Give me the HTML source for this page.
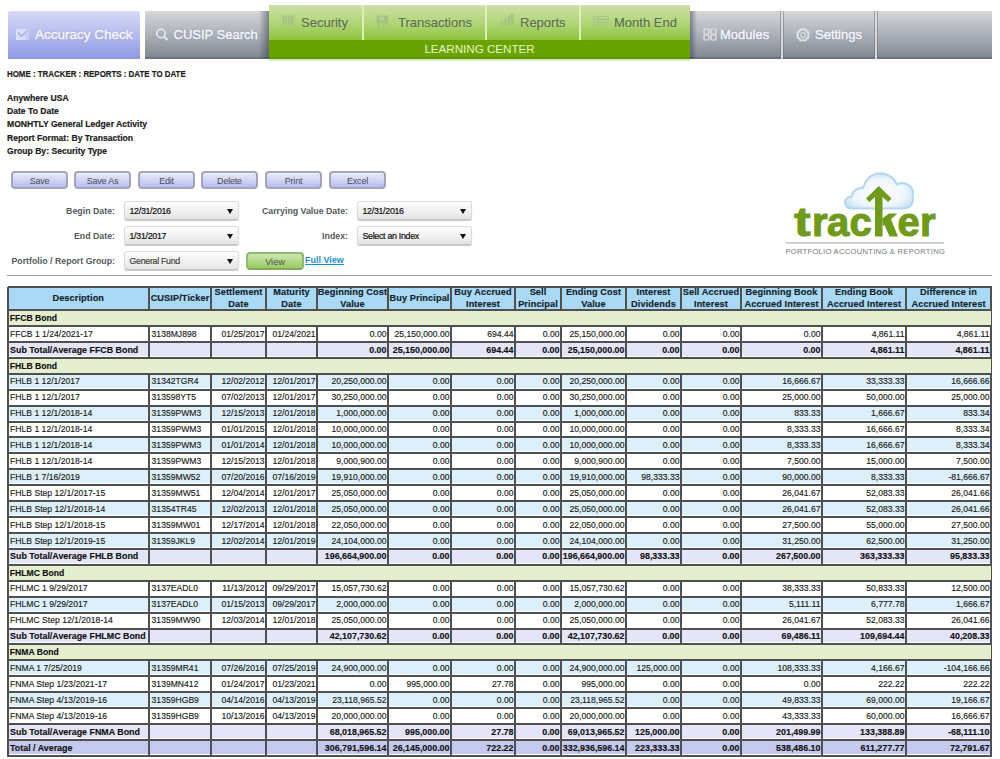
<!DOCTYPE html>
<html><head><meta charset="utf-8"><title>Tracker</title>
<style>
html,body{margin:0;padding:0;background:#fff;}
body{width:1000px;height:759px;overflow:hidden;position:relative;font-family:"Liberation Sans",sans-serif;}
.abs{position:absolute;}
/* nav */
.tab{position:absolute;top:11px;height:48px;}
.acc{left:8px;width:132px;background:linear-gradient(#d6d9f6,#b9bff0 45%,#8d98e1);border-radius:2px 2px 0 0;}
.cus{left:145px;width:124px;background:linear-gradient(#d6d6d7 0,#d6d6d7 2px,#ced1d4 3px,#b4b8bf 40%,#a6abb6 55%,#8d939a 85%,#7f878e 96%,#6c7177 97%,#6c7177);}
.cus:after{content:"";position:absolute;right:0;top:0;width:10px;height:48px;background:linear-gradient(90deg,rgba(60,65,75,0),rgba(60,65,75,.55));}
.gray{left:690px;width:302px;background:linear-gradient(#d6d6d7 0,#d6d6d7 2px,#ced1d4 3px,#b4b8bf 40%,#a6abb6 55%,#8d939a 85%,#7f878e 96%,#6c7177 97%,#6c7177);}
.gray:before{content:"";position:absolute;left:0;top:0;width:7px;height:48px;background:linear-gradient(90deg,rgba(60,62,90,.55),rgba(60,62,90,0));}
.sepg{position:absolute;top:0;width:2px;height:48px;background:#d6d8db;}
.sepd{position:absolute;top:0;width:1px;height:48px;background:rgba(100,106,116,.45);}
.tt{position:absolute;color:#fff;font-size:13px;line-height:13px;white-space:nowrap;-webkit-text-stroke:0.45px #f4f5fb;color:#f4f5fb;text-shadow:0 0 2px rgba(80,85,120,.5);}
.green{position:absolute;left:269px;top:5px;width:421px;height:54px;background:#6aa301;}
.gtop{position:absolute;left:0;top:0;width:421px;height:35px;background:linear-gradient(#cde0a6,#b2d57a 50%,#8ec33f);}
.gsep{position:absolute;top:0;width:2px;height:35px;background:#dcefb8;}
.gt{position:absolute;color:#587049;font-size:13px;line-height:13px;white-space:nowrap;-webkit-text-stroke:0.2px #587049;text-shadow:0 0 2px rgba(230,245,200,.6);}
.lc{position:absolute;left:0;width:421px;top:37.8px;text-align:center;color:#e4f8c0;font-size:11.6px;line-height:12px;}
.green:after{content:"";position:absolute;left:0;bottom:0;width:421px;height:2.5px;background:#5f9400;}
.green:before{content:"";position:absolute;left:0;bottom:-1.5px;width:421px;height:1.5px;background:#d6ecbc;z-index:1;}
/* text */
.bc{position:absolute;left:7px;top:68.3px;font-weight:bold;font-size:9.4px;transform:scaleX(0.843);transform-origin:0 0;color:#1e1e1e;white-space:nowrap;-webkit-text-stroke:0.2px #1e1e1e;}
.ti{position:absolute;left:7px;font-weight:bold;font-size:8.6px;color:#1e1e1e;white-space:nowrap;line-height:10px;-webkit-text-stroke:0.2px #1e1e1e;}
.btn{position:absolute;top:171px;width:53px;height:14px;border:2px solid #a2a5bc;border-radius:4px;background:linear-gradient(#e6e8f9,#d2d6f4 50%,#b6bdee);box-shadow:inset 0 1px 0 #f4f5fd;color:#4a4a55;font-size:9px;letter-spacing:-0.2px;line-height:16px;text-align:center;}
.lbl{position:absolute;font-weight:bold;font-size:8.8px;color:#555a60;text-align:right;white-space:nowrap;}
.sel{position:absolute;width:113px;height:17px;margin-top:-1px;border:1px solid #dcdcdc;border-bottom-color:#c4c4c4;border-radius:3px;background:linear-gradient(#fefefe,#f2f2f2 50%,#e4e4e4);box-shadow:0 1px 1px rgba(0,0,0,.22);font-size:8.8px;letter-spacing:-0.28px;line-height:17px;color:#111;-webkit-text-stroke:0.2px currentColor;}
.sel span{position:absolute;left:4.5px;top:1.3px;}
.sel i{position:absolute;right:5px;top:7.3px;width:0;height:0;border-left:3.6px solid transparent;border-right:3.6px solid transparent;border-top:5.8px solid #111;}
.view{position:absolute;left:246px;top:252px;width:54px;height:14px;border:2px solid #93b872;border-bottom-color:#82a85e;border-radius:4px;background:linear-gradient(#cfe6b2,#b4d88a 50%,#98ca62);color:#4a5444;font-size:9.2px;line-height:16px;text-align:center;}
.fv{position:absolute;left:305px;top:255px;font-size:9px;font-weight:bold;color:#1a8fd8;text-decoration:underline;white-space:nowrap;}
.hr{position:absolute;left:7px;top:275px;width:985px;height:1px;background:#9a9a9a;}
/* table */
.c{position:absolute;box-sizing:border-box;font-size:8.6px;line-height:15px;padding-top:0.6px;white-space:nowrap;overflow:hidden;color:#1c1c1c;-webkit-text-stroke:0.15px currentColor;box-shadow:inset 0 0 0 1px #fff, inset 0 -2px 0 #fff;}
.c.l{text-align:left;padding-left:2.6px;}
.c.r{text-align:right;padding-right:1.5px;}
.th{background:#a9d9f4;font-weight:bold;font-size:9.2px;letter-spacing:0.1px;color:#16222c;text-align:center;display:flex;align-items:center;justify-content:center;line-height:11.9px;padding-top:1.5px;box-shadow:inset 1px 1px 0 #d8eefa;}
.sec{background:#e6eed0;font-weight:bold;color:#111;box-shadow:inset 0 -1px 0 #f4f7e6;padding-top:0;line-height:14.6px;}
.c.sec.l{padding-left:1.3px;}
.d{background:#fff;}
.d.alt{background:#ddeffa;}
.sub{background:#e4e5f9;font-weight:bold;color:#111;font-size:8.9px;}
.tot{background:#c5c9ef;font-weight:bold;color:#111;font-size:8.9px;}
.vl{position:absolute;width:2px;margin-left:-1px;background:#505050;}
.hl{position:absolute;height:2px;margin-top:-1px;background:#505050;}

</style></head><body>
<div class="tab acc">
  <svg class="abs" style="left:8px;top:15px" width="14" height="15" viewBox="0 0 14 15"><rect x="0" y="0.5" width="13" height="1.2" fill="#c2c7f0"/><rect x="0" y="3" width="13" height="11" fill="#d9ddf8"/><path d="M2 6.5l3.2 3.8L12 4" fill="none" stroke="#a9b1e6" stroke-width="1.7"/><rect x="9.5" y="3" width="3.5" height="11" fill="#bcc2ee" opacity=".6"/></svg>
  <div class="tt" style="left:27px;top:17px;font-size:13.5px">Accuracy Check</div>
</div>
<div class="tab cus">
  <svg class="abs" style="left:10px;top:17px" width="14" height="13" viewBox="0 0 14 13"><circle cx="6" cy="5.5" r="4.2" fill="none" stroke="#e8e9eb" stroke-width="1.6"/><path d="M9 8.5l3.5 3.5" stroke="#e8e9eb" stroke-width="2"/></svg>
  <div class="tt" style="left:28.5px;top:17px">CUSIP Search</div>
</div>
<div class="green">
  <div class="gtop"></div>
  <div class="gsep" style="left:93px"></div>
  <div class="gsep" style="left:216px"></div>
  <div class="gsep" style="left:310px"></div>
  <svg class="abs" style="left:12px;top:3.5px" width="15" height="17" viewBox="0 0 15 17"><rect x="0.5" y="0.5" width="14" height="5" fill="#c2dc98" opacity=".7"/><rect x="0.5" y="6" width="13" height="11" fill="#b0cf88" opacity=".6"/><path d="M2.5 6.5v10M5 6.5v10M7.5 6.5v10M10 6.5v10M12 6.5v10" stroke="#9dbd7a" stroke-width="1.2" opacity=".8"/></svg>
  <div class="gt" style="left:32px;top:10.5px">Security</div>
  <svg class="abs" style="left:107px;top:10px" width="14" height="13" viewBox="0 0 14 13"><rect x="0.5" y="0.5" width="12" height="8" rx="1.5" fill="#9fbe7e" opacity=".75"/><rect x="3" y="2" width="5" height="3" fill="#b8d49a" opacity=".8"/><path d="M3 9v3.5M8 9v3.5" stroke="#a3c27f" stroke-width="1.6" opacity=".7"/></svg>
  <div class="gt" style="left:129px;top:10.5px">Transactions</div>
  <svg class="abs" style="left:231px;top:8px" width="14" height="13" viewBox="0 0 14 13"><path d="M2 12.5V8M5.5 12.5V5.5M9 12.5V3M12 12.5V1" stroke="#a0be82" stroke-width="2.6" opacity=".75"/></svg>
  <div class="gt" style="left:251px;top:10.5px">Reports</div>
  <svg class="abs" style="left:323.5px;top:10.5px" width="17" height="10" viewBox="0 0 17 10"><rect x="0.5" y="0.5" width="15" height="8.5" fill="#b5d292" opacity=".6" stroke="#a3c283" stroke-width="1"/><path d="M0.5 3.5h15M0.5 6.3h15M5.5 0.5v8.5" stroke="#a3c283" stroke-width="1"/></svg>
  <div class="gt" style="left:345px;top:10.5px">Month End</div>
  <div class="lc">LEARNING CENTER</div>
</div>
<div class="tab gray">
  <div class="sepd" style="left:90px"></div><div class="sepg" style="left:91px"></div><div class="sepd" style="left:93px"></div>
  <div class="sepd" style="left:184px"></div><div class="sepg" style="left:185px"></div><div class="sepd" style="left:187px"></div>
  <svg class="abs" style="left:13px;top:17px" width="14" height="13" viewBox="0 0 14 13"><rect x="1" y="1" width="5" height="5" rx="1" fill="none" stroke="#e4e6e8" stroke-width="1.2"/><rect x="8" y="1" width="5" height="5" rx="1" fill="none" stroke="#e4e6e8" stroke-width="1.2"/><rect x="1" y="7" width="5" height="5" rx="1" fill="none" stroke="#e4e6e8" stroke-width="1.2"/><rect x="8" y="7" width="5" height="5" rx="1" fill="none" stroke="#e4e6e8" stroke-width="1.2"/></svg>
  <div class="tt" style="left:30px;top:17px">Modules</div>
  <svg class="abs" style="left:105px;top:15.5px" width="16" height="16" viewBox="0 0 16 16"><circle cx="8" cy="8" r="4.6" fill="#dfe1e4"/><circle cx="12.25" cy="9.76" r="2.4" fill="#dfe1e4"/><circle cx="9.76" cy="12.25" r="2.4" fill="#dfe1e4"/><circle cx="6.24" cy="12.25" r="2.4" fill="#dfe1e4"/><circle cx="3.75" cy="9.76" r="2.4" fill="#dfe1e4"/><circle cx="3.75" cy="6.24" r="2.4" fill="#dfe1e4"/><circle cx="6.24" cy="3.75" r="2.4" fill="#dfe1e4"/><circle cx="9.76" cy="3.75" r="2.4" fill="#dfe1e4"/><circle cx="12.25" cy="6.24" r="2.4" fill="#dfe1e4"/><circle cx="8" cy="8" r="3.4" fill="#a9aeb6"/><circle cx="11.14" cy="9.30" r="1.3" fill="#a9aeb6"/><circle cx="9.30" cy="11.14" r="1.3" fill="#a9aeb6"/><circle cx="6.70" cy="11.14" r="1.3" fill="#a9aeb6"/><circle cx="4.86" cy="9.30" r="1.3" fill="#a9aeb6"/><circle cx="4.86" cy="6.70" r="1.3" fill="#a9aeb6"/><circle cx="6.70" cy="4.86" r="1.3" fill="#a9aeb6"/><circle cx="9.30" cy="4.86" r="1.3" fill="#a9aeb6"/><circle cx="11.14" cy="6.70" r="1.3" fill="#a9aeb6"/><circle cx="8" cy="8" r="2.3" fill="none" stroke="#dfe1e4" stroke-width="1.2"/></svg>
  <div class="tt" style="left:125px;top:17px">Settings</div>
</div>

<div class="bc">HOME : TRACKER : REPORTS : DATE TO DATE</div>
<div class="ti" style="top:92.6px">Anywhere USA</div>
<div class="ti" style="top:106.1px">Date To Date</div>
<div class="ti" style="top:119.3px">MONHTLY General Ledger Activity</div>
<div class="ti" style="top:132.6px">Report Format: By Transaction</div>
<div class="ti" style="top:146.1px">Group By: Security Type</div>

<div class="btn" style="left:11px">Save</div>
<div class="btn" style="left:74px">Save As</div>
<div class="btn" style="left:138px">Edit</div>
<div class="btn" style="left:201px">Delete</div>
<div class="btn" style="left:265px">Print</div>
<div class="btn" style="left:329px">Excel</div>

<div class="lbl" style="right:885px;top:206px">Begin Date:</div>
<div class="lbl" style="right:885px;top:231px">End Date:</div>
<div class="lbl" style="right:885px;top:256px">Portfolio / Report Group:</div>
<div class="sel" style="left:124px;top:202px"><span>12/31/2016</span><i></i></div>
<div class="sel" style="left:124px;top:227px"><span>1/31/2017</span><i></i></div>
<div class="sel" style="left:124px;top:252px"><span style="color:#444">General Fund</span><i></i></div>
<div class="lbl" style="right:652px;top:206px">Carrying Value Date:</div>
<div class="lbl" style="right:652px;top:231px">Index:</div>
<div class="sel" style="left:357px;top:202px"><span>12/31/2016</span><i></i></div>
<div class="sel" style="left:357px;top:227px"><span>Select an Index</span><i></i></div>
<div class="view">View</div>
<div class="fv">Full View</div>

<svg class="abs" style="left:780px;top:165px" width="180" height="100" viewBox="0 0 180 100">
  <defs><radialGradient id="cg" cx="50%" cy="55%" r="65%"><stop offset="0" stop-color="#ffffff"/><stop offset="0.6" stop-color="#eef6fc"/><stop offset="1" stop-color="#b9d9f1"/></radialGradient></defs>
  <path d="M72 43.5 C63.5 43.5 62 33 71.5 31.5 C72.5 26 77 22.5 83 23 C86 13 93 8.4 100 8.4 C108 8.4 114 13 117 19.5 C126 15.5 134.5 22 132.5 31 C134.5 38 130 43.5 124 43.5 Z" fill="url(#cg)" stroke="#b6d8f1" stroke-width="2.2"/>
  <g fill="#6f9a1b" stroke="#6f9a1b" stroke-width="1.1" font-family="Liberation Sans" font-weight="bold" font-size="40">
  <text transform="translate(14.3,71) scale(1.22,1)">t</text>
  <text x="32" y="71">r</text>
  <text x="47" y="71">a</text>
  <text x="69.5" y="71">c</text>
  <text x="117.5" y="71">e</text>
  <text x="140" y="71">r</text>
  </g>
  <path d="M98.75 71.5V26" stroke="#6f9a1b" stroke-width="7.5"/>
  <path d="M98.75 21L111.5 33.5L108 37L98.75 28.5L89.5 37L86 33.5Z" fill="#6f9a1b"/>
  <path d="M102 53.5L109 48.6L117.5 48.6L103 61Z M104 59L110.5 53L118 71.4L109.5 71.4Z" fill="#6f9a1b"/>
  <rect x="5.4" y="77" width="158.6" height="1.8" fill="#c9cccf"/>
  <text x="5.4" y="89" font-family="Liberation Sans" font-size="7.6" fill="#74777a" letter-spacing="0.28">PORTFOLIO ACCOUNTING &amp; REPORTING</text>
</svg>

<div class="hr"></div>
<div class="c th" style="left:7.50px;width:141.50px;top:286.60px;height:23.50px"><span>Description</span></div>
<div class="c th" style="left:149.00px;width:62.00px;top:286.60px;height:23.50px"><span>CUSIP/Ticker</span></div>
<div class="c th" style="left:211.00px;width:55.00px;top:286.60px;height:23.50px"><span>Settlement<br>Date</span></div>
<div class="c th" style="left:266.00px;width:51.00px;top:286.60px;height:23.50px"><span>Maturity<br>Date</span></div>
<div class="c th" style="left:317.00px;width:71.00px;top:286.60px;height:23.50px"><span>Beginning Cost<br>Value</span></div>
<div class="c th" style="left:388.00px;width:63.00px;top:286.60px;height:23.50px"><span>Buy Principal</span></div>
<div class="c th" style="left:451.00px;width:64.00px;top:286.60px;height:23.50px"><span>Buy Accrued<br>Interest</span></div>
<div class="c th" style="left:515.00px;width:46.00px;top:286.60px;height:23.50px"><span>Sell<br>Principal</span></div>
<div class="c th" style="left:561.00px;width:65.00px;top:286.60px;height:23.50px"><span>Ending Cost<br>Value</span></div>
<div class="c th" style="left:626.00px;width:55.00px;top:286.60px;height:23.50px"><span>Interest<br>Dividends</span></div>
<div class="c th" style="left:681.00px;width:60.00px;top:286.60px;height:23.50px"><span>Sell Accrued<br>Interest</span></div>
<div class="c th" style="left:741.00px;width:81.00px;top:286.60px;height:23.50px"><span>Beginning Book<br>Accrued Interest</span></div>
<div class="c th" style="left:822.00px;width:84.00px;top:286.60px;height:23.50px"><span>Ending Book<br>Accrued Interest</span></div>
<div class="c th" style="left:906.00px;width:85.00px;top:286.60px;height:23.50px"><span>Difference in<br>Accrued Interest</span></div>
<div class="c d l" style="left:7.50px;width:141.50px;top:326.02px;height:15.92px">FFCB 1 1/24/2021-17</div>
<div class="c d l" style="left:149.00px;width:62.00px;top:326.02px;height:15.92px">3138MJ898</div>
<div class="c d r" style="left:211.00px;width:55.00px;top:326.02px;height:15.92px">01/25/2017</div>
<div class="c d r" style="left:266.00px;width:51.00px;top:326.02px;height:15.92px">01/24/2021</div>
<div class="c d r" style="left:317.00px;width:71.00px;top:326.02px;height:15.92px">0.00</div>
<div class="c d r" style="left:388.00px;width:63.00px;top:326.02px;height:15.92px">25,150,000.00</div>
<div class="c d r" style="left:451.00px;width:64.00px;top:326.02px;height:15.92px">694.44</div>
<div class="c d r" style="left:515.00px;width:46.00px;top:326.02px;height:15.92px">0.00</div>
<div class="c d r" style="left:561.00px;width:65.00px;top:326.02px;height:15.92px">25,150,000.00</div>
<div class="c d r" style="left:626.00px;width:55.00px;top:326.02px;height:15.92px">0.00</div>
<div class="c d r" style="left:681.00px;width:60.00px;top:326.02px;height:15.92px">0.00</div>
<div class="c d r" style="left:741.00px;width:81.00px;top:326.02px;height:15.92px">0.00</div>
<div class="c d r" style="left:822.00px;width:84.00px;top:326.02px;height:15.92px">4,861.11</div>
<div class="c d r" style="left:906.00px;width:85.00px;top:326.02px;height:15.92px">4,861.11</div>
<div class="c sub l" style="left:7.50px;width:141.50px;top:341.94px;height:15.92px">Sub Total/Average FFCB Bond</div>
<div class="c sub l" style="left:149.00px;width:62.00px;top:341.94px;height:15.92px"></div>
<div class="c sub r" style="left:211.00px;width:55.00px;top:341.94px;height:15.92px"></div>
<div class="c sub r" style="left:266.00px;width:51.00px;top:341.94px;height:15.92px"></div>
<div class="c sub r" style="left:317.00px;width:71.00px;top:341.94px;height:15.92px">0.00</div>
<div class="c sub r" style="left:388.00px;width:63.00px;top:341.94px;height:15.92px">25,150,000.00</div>
<div class="c sub r" style="left:451.00px;width:64.00px;top:341.94px;height:15.92px">694.44</div>
<div class="c sub r" style="left:515.00px;width:46.00px;top:341.94px;height:15.92px">0.00</div>
<div class="c sub r" style="left:561.00px;width:65.00px;top:341.94px;height:15.92px">25,150,000.00</div>
<div class="c sub r" style="left:626.00px;width:55.00px;top:341.94px;height:15.92px">0.00</div>
<div class="c sub r" style="left:681.00px;width:60.00px;top:341.94px;height:15.92px">0.00</div>
<div class="c sub r" style="left:741.00px;width:81.00px;top:341.94px;height:15.92px">0.00</div>
<div class="c sub r" style="left:822.00px;width:84.00px;top:341.94px;height:15.92px">4,861.11</div>
<div class="c sub r" style="left:906.00px;width:85.00px;top:341.94px;height:15.92px">4,861.11</div>
<div class="c d alt l" style="left:7.50px;width:141.50px;top:373.78px;height:15.92px">FHLB 1 12/1/2017</div>
<div class="c d alt l" style="left:149.00px;width:62.00px;top:373.78px;height:15.92px">31342TGR4</div>
<div class="c d alt r" style="left:211.00px;width:55.00px;top:373.78px;height:15.92px">12/02/2012</div>
<div class="c d alt r" style="left:266.00px;width:51.00px;top:373.78px;height:15.92px">12/01/2017</div>
<div class="c d alt r" style="left:317.00px;width:71.00px;top:373.78px;height:15.92px">20,250,000.00</div>
<div class="c d alt r" style="left:388.00px;width:63.00px;top:373.78px;height:15.92px">0.00</div>
<div class="c d alt r" style="left:451.00px;width:64.00px;top:373.78px;height:15.92px">0.00</div>
<div class="c d alt r" style="left:515.00px;width:46.00px;top:373.78px;height:15.92px">0.00</div>
<div class="c d alt r" style="left:561.00px;width:65.00px;top:373.78px;height:15.92px">20,250,000.00</div>
<div class="c d alt r" style="left:626.00px;width:55.00px;top:373.78px;height:15.92px">0.00</div>
<div class="c d alt r" style="left:681.00px;width:60.00px;top:373.78px;height:15.92px">0.00</div>
<div class="c d alt r" style="left:741.00px;width:81.00px;top:373.78px;height:15.92px">16,666.67</div>
<div class="c d alt r" style="left:822.00px;width:84.00px;top:373.78px;height:15.92px">33,333.33</div>
<div class="c d alt r" style="left:906.00px;width:85.00px;top:373.78px;height:15.92px">16,666.66</div>
<div class="c d l" style="left:7.50px;width:141.50px;top:389.70px;height:15.92px">FHLB 1 12/1/2017</div>
<div class="c d l" style="left:149.00px;width:62.00px;top:389.70px;height:15.92px">313598YT5</div>
<div class="c d r" style="left:211.00px;width:55.00px;top:389.70px;height:15.92px">07/02/2013</div>
<div class="c d r" style="left:266.00px;width:51.00px;top:389.70px;height:15.92px">12/01/2017</div>
<div class="c d r" style="left:317.00px;width:71.00px;top:389.70px;height:15.92px">30,250,000.00</div>
<div class="c d r" style="left:388.00px;width:63.00px;top:389.70px;height:15.92px">0.00</div>
<div class="c d r" style="left:451.00px;width:64.00px;top:389.70px;height:15.92px">0.00</div>
<div class="c d r" style="left:515.00px;width:46.00px;top:389.70px;height:15.92px">0.00</div>
<div class="c d r" style="left:561.00px;width:65.00px;top:389.70px;height:15.92px">30,250,000.00</div>
<div class="c d r" style="left:626.00px;width:55.00px;top:389.70px;height:15.92px">0.00</div>
<div class="c d r" style="left:681.00px;width:60.00px;top:389.70px;height:15.92px">0.00</div>
<div class="c d r" style="left:741.00px;width:81.00px;top:389.70px;height:15.92px">25,000.00</div>
<div class="c d r" style="left:822.00px;width:84.00px;top:389.70px;height:15.92px">50,000.00</div>
<div class="c d r" style="left:906.00px;width:85.00px;top:389.70px;height:15.92px">25,000.00</div>
<div class="c d alt l" style="left:7.50px;width:141.50px;top:405.62px;height:15.92px">FHLB 1 12/1/2018-14</div>
<div class="c d alt l" style="left:149.00px;width:62.00px;top:405.62px;height:15.92px">31359PWM3</div>
<div class="c d alt r" style="left:211.00px;width:55.00px;top:405.62px;height:15.92px">12/15/2013</div>
<div class="c d alt r" style="left:266.00px;width:51.00px;top:405.62px;height:15.92px">12/01/2018</div>
<div class="c d alt r" style="left:317.00px;width:71.00px;top:405.62px;height:15.92px">1,000,000.00</div>
<div class="c d alt r" style="left:388.00px;width:63.00px;top:405.62px;height:15.92px">0.00</div>
<div class="c d alt r" style="left:451.00px;width:64.00px;top:405.62px;height:15.92px">0.00</div>
<div class="c d alt r" style="left:515.00px;width:46.00px;top:405.62px;height:15.92px">0.00</div>
<div class="c d alt r" style="left:561.00px;width:65.00px;top:405.62px;height:15.92px">1,000,000.00</div>
<div class="c d alt r" style="left:626.00px;width:55.00px;top:405.62px;height:15.92px">0.00</div>
<div class="c d alt r" style="left:681.00px;width:60.00px;top:405.62px;height:15.92px">0.00</div>
<div class="c d alt r" style="left:741.00px;width:81.00px;top:405.62px;height:15.92px">833.33</div>
<div class="c d alt r" style="left:822.00px;width:84.00px;top:405.62px;height:15.92px">1,666.67</div>
<div class="c d alt r" style="left:906.00px;width:85.00px;top:405.62px;height:15.92px">833.34</div>
<div class="c d l" style="left:7.50px;width:141.50px;top:421.54px;height:15.92px">FHLB 1 12/1/2018-14</div>
<div class="c d l" style="left:149.00px;width:62.00px;top:421.54px;height:15.92px">31359PWM3</div>
<div class="c d r" style="left:211.00px;width:55.00px;top:421.54px;height:15.92px">01/01/2015</div>
<div class="c d r" style="left:266.00px;width:51.00px;top:421.54px;height:15.92px">12/01/2018</div>
<div class="c d r" style="left:317.00px;width:71.00px;top:421.54px;height:15.92px">10,000,000.00</div>
<div class="c d r" style="left:388.00px;width:63.00px;top:421.54px;height:15.92px">0.00</div>
<div class="c d r" style="left:451.00px;width:64.00px;top:421.54px;height:15.92px">0.00</div>
<div class="c d r" style="left:515.00px;width:46.00px;top:421.54px;height:15.92px">0.00</div>
<div class="c d r" style="left:561.00px;width:65.00px;top:421.54px;height:15.92px">10,000,000.00</div>
<div class="c d r" style="left:626.00px;width:55.00px;top:421.54px;height:15.92px">0.00</div>
<div class="c d r" style="left:681.00px;width:60.00px;top:421.54px;height:15.92px">0.00</div>
<div class="c d r" style="left:741.00px;width:81.00px;top:421.54px;height:15.92px">8,333.33</div>
<div class="c d r" style="left:822.00px;width:84.00px;top:421.54px;height:15.92px">16,666.67</div>
<div class="c d r" style="left:906.00px;width:85.00px;top:421.54px;height:15.92px">8,333.34</div>
<div class="c d alt l" style="left:7.50px;width:141.50px;top:437.46px;height:15.92px">FHLB 1 12/1/2018-14</div>
<div class="c d alt l" style="left:149.00px;width:62.00px;top:437.46px;height:15.92px">31359PWM3</div>
<div class="c d alt r" style="left:211.00px;width:55.00px;top:437.46px;height:15.92px">01/01/2014</div>
<div class="c d alt r" style="left:266.00px;width:51.00px;top:437.46px;height:15.92px">12/01/2018</div>
<div class="c d alt r" style="left:317.00px;width:71.00px;top:437.46px;height:15.92px">10,000,000.00</div>
<div class="c d alt r" style="left:388.00px;width:63.00px;top:437.46px;height:15.92px">0.00</div>
<div class="c d alt r" style="left:451.00px;width:64.00px;top:437.46px;height:15.92px">0.00</div>
<div class="c d alt r" style="left:515.00px;width:46.00px;top:437.46px;height:15.92px">0.00</div>
<div class="c d alt r" style="left:561.00px;width:65.00px;top:437.46px;height:15.92px">10,000,000.00</div>
<div class="c d alt r" style="left:626.00px;width:55.00px;top:437.46px;height:15.92px">0.00</div>
<div class="c d alt r" style="left:681.00px;width:60.00px;top:437.46px;height:15.92px">0.00</div>
<div class="c d alt r" style="left:741.00px;width:81.00px;top:437.46px;height:15.92px">8,333.33</div>
<div class="c d alt r" style="left:822.00px;width:84.00px;top:437.46px;height:15.92px">16,666.67</div>
<div class="c d alt r" style="left:906.00px;width:85.00px;top:437.46px;height:15.92px">8,333.34</div>
<div class="c d l" style="left:7.50px;width:141.50px;top:453.38px;height:15.92px">FHLB 1 12/1/2018-14</div>
<div class="c d l" style="left:149.00px;width:62.00px;top:453.38px;height:15.92px">31359PWM3</div>
<div class="c d r" style="left:211.00px;width:55.00px;top:453.38px;height:15.92px">12/15/2013</div>
<div class="c d r" style="left:266.00px;width:51.00px;top:453.38px;height:15.92px">12/01/2018</div>
<div class="c d r" style="left:317.00px;width:71.00px;top:453.38px;height:15.92px">9,000,900.00</div>
<div class="c d r" style="left:388.00px;width:63.00px;top:453.38px;height:15.92px">0.00</div>
<div class="c d r" style="left:451.00px;width:64.00px;top:453.38px;height:15.92px">0.00</div>
<div class="c d r" style="left:515.00px;width:46.00px;top:453.38px;height:15.92px">0.00</div>
<div class="c d r" style="left:561.00px;width:65.00px;top:453.38px;height:15.92px">9,000,900.00</div>
<div class="c d r" style="left:626.00px;width:55.00px;top:453.38px;height:15.92px">0.00</div>
<div class="c d r" style="left:681.00px;width:60.00px;top:453.38px;height:15.92px">0.00</div>
<div class="c d r" style="left:741.00px;width:81.00px;top:453.38px;height:15.92px">7,500.00</div>
<div class="c d r" style="left:822.00px;width:84.00px;top:453.38px;height:15.92px">15,000.00</div>
<div class="c d r" style="left:906.00px;width:85.00px;top:453.38px;height:15.92px">7,500.00</div>
<div class="c d alt l" style="left:7.50px;width:141.50px;top:469.30px;height:15.92px">FHLB 1 7/16/2019</div>
<div class="c d alt l" style="left:149.00px;width:62.00px;top:469.30px;height:15.92px">31359MW52</div>
<div class="c d alt r" style="left:211.00px;width:55.00px;top:469.30px;height:15.92px">07/20/2016</div>
<div class="c d alt r" style="left:266.00px;width:51.00px;top:469.30px;height:15.92px">07/16/2019</div>
<div class="c d alt r" style="left:317.00px;width:71.00px;top:469.30px;height:15.92px">19,910,000.00</div>
<div class="c d alt r" style="left:388.00px;width:63.00px;top:469.30px;height:15.92px">0.00</div>
<div class="c d alt r" style="left:451.00px;width:64.00px;top:469.30px;height:15.92px">0.00</div>
<div class="c d alt r" style="left:515.00px;width:46.00px;top:469.30px;height:15.92px">0.00</div>
<div class="c d alt r" style="left:561.00px;width:65.00px;top:469.30px;height:15.92px">19,910,000.00</div>
<div class="c d alt r" style="left:626.00px;width:55.00px;top:469.30px;height:15.92px">98,333.33</div>
<div class="c d alt r" style="left:681.00px;width:60.00px;top:469.30px;height:15.92px">0.00</div>
<div class="c d alt r" style="left:741.00px;width:81.00px;top:469.30px;height:15.92px">90,000.00</div>
<div class="c d alt r" style="left:822.00px;width:84.00px;top:469.30px;height:15.92px">8,333.33</div>
<div class="c d alt r" style="left:906.00px;width:85.00px;top:469.30px;height:15.92px">-81,666.67</div>
<div class="c d l" style="left:7.50px;width:141.50px;top:485.22px;height:15.92px">FHLB Step 12/1/2017-15</div>
<div class="c d l" style="left:149.00px;width:62.00px;top:485.22px;height:15.92px">31359MW51</div>
<div class="c d r" style="left:211.00px;width:55.00px;top:485.22px;height:15.92px">12/04/2014</div>
<div class="c d r" style="left:266.00px;width:51.00px;top:485.22px;height:15.92px">12/01/2017</div>
<div class="c d r" style="left:317.00px;width:71.00px;top:485.22px;height:15.92px">25,050,000.00</div>
<div class="c d r" style="left:388.00px;width:63.00px;top:485.22px;height:15.92px">0.00</div>
<div class="c d r" style="left:451.00px;width:64.00px;top:485.22px;height:15.92px">0.00</div>
<div class="c d r" style="left:515.00px;width:46.00px;top:485.22px;height:15.92px">0.00</div>
<div class="c d r" style="left:561.00px;width:65.00px;top:485.22px;height:15.92px">25,050,000.00</div>
<div class="c d r" style="left:626.00px;width:55.00px;top:485.22px;height:15.92px">0.00</div>
<div class="c d r" style="left:681.00px;width:60.00px;top:485.22px;height:15.92px">0.00</div>
<div class="c d r" style="left:741.00px;width:81.00px;top:485.22px;height:15.92px">26,041.67</div>
<div class="c d r" style="left:822.00px;width:84.00px;top:485.22px;height:15.92px">52,083.33</div>
<div class="c d r" style="left:906.00px;width:85.00px;top:485.22px;height:15.92px">26,041.66</div>
<div class="c d alt l" style="left:7.50px;width:141.50px;top:501.14px;height:15.92px">FHLB Step 12/1/2018-14</div>
<div class="c d alt l" style="left:149.00px;width:62.00px;top:501.14px;height:15.92px">31354TR45</div>
<div class="c d alt r" style="left:211.00px;width:55.00px;top:501.14px;height:15.92px">12/02/2013</div>
<div class="c d alt r" style="left:266.00px;width:51.00px;top:501.14px;height:15.92px">12/01/2018</div>
<div class="c d alt r" style="left:317.00px;width:71.00px;top:501.14px;height:15.92px">25,050,000.00</div>
<div class="c d alt r" style="left:388.00px;width:63.00px;top:501.14px;height:15.92px">0.00</div>
<div class="c d alt r" style="left:451.00px;width:64.00px;top:501.14px;height:15.92px">0.00</div>
<div class="c d alt r" style="left:515.00px;width:46.00px;top:501.14px;height:15.92px">0.00</div>
<div class="c d alt r" style="left:561.00px;width:65.00px;top:501.14px;height:15.92px">25,050,000.00</div>
<div class="c d alt r" style="left:626.00px;width:55.00px;top:501.14px;height:15.92px">0.00</div>
<div class="c d alt r" style="left:681.00px;width:60.00px;top:501.14px;height:15.92px">0.00</div>
<div class="c d alt r" style="left:741.00px;width:81.00px;top:501.14px;height:15.92px">26,041.67</div>
<div class="c d alt r" style="left:822.00px;width:84.00px;top:501.14px;height:15.92px">52,083.33</div>
<div class="c d alt r" style="left:906.00px;width:85.00px;top:501.14px;height:15.92px">26,041.66</div>
<div class="c d l" style="left:7.50px;width:141.50px;top:517.06px;height:15.92px">FHLB Step 12/1/2018-15</div>
<div class="c d l" style="left:149.00px;width:62.00px;top:517.06px;height:15.92px">31359MW01</div>
<div class="c d r" style="left:211.00px;width:55.00px;top:517.06px;height:15.92px">12/17/2014</div>
<div class="c d r" style="left:266.00px;width:51.00px;top:517.06px;height:15.92px">12/01/2018</div>
<div class="c d r" style="left:317.00px;width:71.00px;top:517.06px;height:15.92px">22,050,000.00</div>
<div class="c d r" style="left:388.00px;width:63.00px;top:517.06px;height:15.92px">0.00</div>
<div class="c d r" style="left:451.00px;width:64.00px;top:517.06px;height:15.92px">0.00</div>
<div class="c d r" style="left:515.00px;width:46.00px;top:517.06px;height:15.92px">0.00</div>
<div class="c d r" style="left:561.00px;width:65.00px;top:517.06px;height:15.92px">22,050,000.00</div>
<div class="c d r" style="left:626.00px;width:55.00px;top:517.06px;height:15.92px">0.00</div>
<div class="c d r" style="left:681.00px;width:60.00px;top:517.06px;height:15.92px">0.00</div>
<div class="c d r" style="left:741.00px;width:81.00px;top:517.06px;height:15.92px">27,500.00</div>
<div class="c d r" style="left:822.00px;width:84.00px;top:517.06px;height:15.92px">55,000.00</div>
<div class="c d r" style="left:906.00px;width:85.00px;top:517.06px;height:15.92px">27,500.00</div>
<div class="c d alt l" style="left:7.50px;width:141.50px;top:532.98px;height:15.92px">FHLB Step 12/1/2019-15</div>
<div class="c d alt l" style="left:149.00px;width:62.00px;top:532.98px;height:15.92px">31359JKL9</div>
<div class="c d alt r" style="left:211.00px;width:55.00px;top:532.98px;height:15.92px">12/02/2014</div>
<div class="c d alt r" style="left:266.00px;width:51.00px;top:532.98px;height:15.92px">12/01/2019</div>
<div class="c d alt r" style="left:317.00px;width:71.00px;top:532.98px;height:15.92px">24,104,000.00</div>
<div class="c d alt r" style="left:388.00px;width:63.00px;top:532.98px;height:15.92px">0.00</div>
<div class="c d alt r" style="left:451.00px;width:64.00px;top:532.98px;height:15.92px">0.00</div>
<div class="c d alt r" style="left:515.00px;width:46.00px;top:532.98px;height:15.92px">0.00</div>
<div class="c d alt r" style="left:561.00px;width:65.00px;top:532.98px;height:15.92px">24,104,000.00</div>
<div class="c d alt r" style="left:626.00px;width:55.00px;top:532.98px;height:15.92px">0.00</div>
<div class="c d alt r" style="left:681.00px;width:60.00px;top:532.98px;height:15.92px">0.00</div>
<div class="c d alt r" style="left:741.00px;width:81.00px;top:532.98px;height:15.92px">31,250.00</div>
<div class="c d alt r" style="left:822.00px;width:84.00px;top:532.98px;height:15.92px">62,500.00</div>
<div class="c d alt r" style="left:906.00px;width:85.00px;top:532.98px;height:15.92px">31,250.00</div>
<div class="c sub l" style="left:7.50px;width:141.50px;top:548.90px;height:15.92px">Sub Total/Average FHLB Bond</div>
<div class="c sub l" style="left:149.00px;width:62.00px;top:548.90px;height:15.92px"></div>
<div class="c sub r" style="left:211.00px;width:55.00px;top:548.90px;height:15.92px"></div>
<div class="c sub r" style="left:266.00px;width:51.00px;top:548.90px;height:15.92px"></div>
<div class="c sub r" style="left:317.00px;width:71.00px;top:548.90px;height:15.92px">196,664,900.00</div>
<div class="c sub r" style="left:388.00px;width:63.00px;top:548.90px;height:15.92px">0.00</div>
<div class="c sub r" style="left:451.00px;width:64.00px;top:548.90px;height:15.92px">0.00</div>
<div class="c sub r" style="left:515.00px;width:46.00px;top:548.90px;height:15.92px">0.00</div>
<div class="c sub r" style="left:561.00px;width:65.00px;top:548.90px;height:15.92px">196,664,900.00</div>
<div class="c sub r" style="left:626.00px;width:55.00px;top:548.90px;height:15.92px">98,333.33</div>
<div class="c sub r" style="left:681.00px;width:60.00px;top:548.90px;height:15.92px">0.00</div>
<div class="c sub r" style="left:741.00px;width:81.00px;top:548.90px;height:15.92px">267,500.00</div>
<div class="c sub r" style="left:822.00px;width:84.00px;top:548.90px;height:15.92px">363,333.33</div>
<div class="c sub r" style="left:906.00px;width:85.00px;top:548.90px;height:15.92px">95,833.33</div>
<div class="c d l" style="left:7.50px;width:141.50px;top:580.74px;height:15.92px">FHLMC 1 9/29/2017</div>
<div class="c d l" style="left:149.00px;width:62.00px;top:580.74px;height:15.92px">3137EADL0</div>
<div class="c d r" style="left:211.00px;width:55.00px;top:580.74px;height:15.92px">11/13/2012</div>
<div class="c d r" style="left:266.00px;width:51.00px;top:580.74px;height:15.92px">09/29/2017</div>
<div class="c d r" style="left:317.00px;width:71.00px;top:580.74px;height:15.92px">15,057,730.62</div>
<div class="c d r" style="left:388.00px;width:63.00px;top:580.74px;height:15.92px">0.00</div>
<div class="c d r" style="left:451.00px;width:64.00px;top:580.74px;height:15.92px">0.00</div>
<div class="c d r" style="left:515.00px;width:46.00px;top:580.74px;height:15.92px">0.00</div>
<div class="c d r" style="left:561.00px;width:65.00px;top:580.74px;height:15.92px">15,057,730.62</div>
<div class="c d r" style="left:626.00px;width:55.00px;top:580.74px;height:15.92px">0.00</div>
<div class="c d r" style="left:681.00px;width:60.00px;top:580.74px;height:15.92px">0.00</div>
<div class="c d r" style="left:741.00px;width:81.00px;top:580.74px;height:15.92px">38,333.33</div>
<div class="c d r" style="left:822.00px;width:84.00px;top:580.74px;height:15.92px">50,833.33</div>
<div class="c d r" style="left:906.00px;width:85.00px;top:580.74px;height:15.92px">12,500.00</div>
<div class="c d alt l" style="left:7.50px;width:141.50px;top:596.66px;height:15.92px">FHLMC 1 9/29/2017</div>
<div class="c d alt l" style="left:149.00px;width:62.00px;top:596.66px;height:15.92px">3137EADL0</div>
<div class="c d alt r" style="left:211.00px;width:55.00px;top:596.66px;height:15.92px">01/15/2013</div>
<div class="c d alt r" style="left:266.00px;width:51.00px;top:596.66px;height:15.92px">09/29/2017</div>
<div class="c d alt r" style="left:317.00px;width:71.00px;top:596.66px;height:15.92px">2,000,000.00</div>
<div class="c d alt r" style="left:388.00px;width:63.00px;top:596.66px;height:15.92px">0.00</div>
<div class="c d alt r" style="left:451.00px;width:64.00px;top:596.66px;height:15.92px">0.00</div>
<div class="c d alt r" style="left:515.00px;width:46.00px;top:596.66px;height:15.92px">0.00</div>
<div class="c d alt r" style="left:561.00px;width:65.00px;top:596.66px;height:15.92px">2,000,000.00</div>
<div class="c d alt r" style="left:626.00px;width:55.00px;top:596.66px;height:15.92px">0.00</div>
<div class="c d alt r" style="left:681.00px;width:60.00px;top:596.66px;height:15.92px">0.00</div>
<div class="c d alt r" style="left:741.00px;width:81.00px;top:596.66px;height:15.92px">5,111.11</div>
<div class="c d alt r" style="left:822.00px;width:84.00px;top:596.66px;height:15.92px">6,777.78</div>
<div class="c d alt r" style="left:906.00px;width:85.00px;top:596.66px;height:15.92px">1,666.67</div>
<div class="c d l" style="left:7.50px;width:141.50px;top:612.58px;height:15.92px">FHLMC Step 12/1/2018-14</div>
<div class="c d l" style="left:149.00px;width:62.00px;top:612.58px;height:15.92px">31359MW90</div>
<div class="c d r" style="left:211.00px;width:55.00px;top:612.58px;height:15.92px">12/03/2014</div>
<div class="c d r" style="left:266.00px;width:51.00px;top:612.58px;height:15.92px">12/01/2018</div>
<div class="c d r" style="left:317.00px;width:71.00px;top:612.58px;height:15.92px">25,050,000.00</div>
<div class="c d r" style="left:388.00px;width:63.00px;top:612.58px;height:15.92px">0.00</div>
<div class="c d r" style="left:451.00px;width:64.00px;top:612.58px;height:15.92px">0.00</div>
<div class="c d r" style="left:515.00px;width:46.00px;top:612.58px;height:15.92px">0.00</div>
<div class="c d r" style="left:561.00px;width:65.00px;top:612.58px;height:15.92px">25,050,000.00</div>
<div class="c d r" style="left:626.00px;width:55.00px;top:612.58px;height:15.92px">0.00</div>
<div class="c d r" style="left:681.00px;width:60.00px;top:612.58px;height:15.92px">0.00</div>
<div class="c d r" style="left:741.00px;width:81.00px;top:612.58px;height:15.92px">26,041.67</div>
<div class="c d r" style="left:822.00px;width:84.00px;top:612.58px;height:15.92px">52,083.33</div>
<div class="c d r" style="left:906.00px;width:85.00px;top:612.58px;height:15.92px">26,041.66</div>
<div class="c sub l" style="left:7.50px;width:141.50px;top:628.50px;height:15.92px">Sub Total/Average FHLMC Bond</div>
<div class="c sub l" style="left:149.00px;width:62.00px;top:628.50px;height:15.92px"></div>
<div class="c sub r" style="left:211.00px;width:55.00px;top:628.50px;height:15.92px"></div>
<div class="c sub r" style="left:266.00px;width:51.00px;top:628.50px;height:15.92px"></div>
<div class="c sub r" style="left:317.00px;width:71.00px;top:628.50px;height:15.92px">42,107,730.62</div>
<div class="c sub r" style="left:388.00px;width:63.00px;top:628.50px;height:15.92px">0.00</div>
<div class="c sub r" style="left:451.00px;width:64.00px;top:628.50px;height:15.92px">0.00</div>
<div class="c sub r" style="left:515.00px;width:46.00px;top:628.50px;height:15.92px">0.00</div>
<div class="c sub r" style="left:561.00px;width:65.00px;top:628.50px;height:15.92px">42,107,730.62</div>
<div class="c sub r" style="left:626.00px;width:55.00px;top:628.50px;height:15.92px">0.00</div>
<div class="c sub r" style="left:681.00px;width:60.00px;top:628.50px;height:15.92px">0.00</div>
<div class="c sub r" style="left:741.00px;width:81.00px;top:628.50px;height:15.92px">69,486.11</div>
<div class="c sub r" style="left:822.00px;width:84.00px;top:628.50px;height:15.92px">109,694.44</div>
<div class="c sub r" style="left:906.00px;width:85.00px;top:628.50px;height:15.92px">40,208.33</div>
<div class="c d alt l" style="left:7.50px;width:141.50px;top:660.34px;height:15.92px">FNMA 1 7/25/2019</div>
<div class="c d alt l" style="left:149.00px;width:62.00px;top:660.34px;height:15.92px">31359MR41</div>
<div class="c d alt r" style="left:211.00px;width:55.00px;top:660.34px;height:15.92px">07/26/2016</div>
<div class="c d alt r" style="left:266.00px;width:51.00px;top:660.34px;height:15.92px">07/25/2019</div>
<div class="c d alt r" style="left:317.00px;width:71.00px;top:660.34px;height:15.92px">24,900,000.00</div>
<div class="c d alt r" style="left:388.00px;width:63.00px;top:660.34px;height:15.92px">0.00</div>
<div class="c d alt r" style="left:451.00px;width:64.00px;top:660.34px;height:15.92px">0.00</div>
<div class="c d alt r" style="left:515.00px;width:46.00px;top:660.34px;height:15.92px">0.00</div>
<div class="c d alt r" style="left:561.00px;width:65.00px;top:660.34px;height:15.92px">24,900,000.00</div>
<div class="c d alt r" style="left:626.00px;width:55.00px;top:660.34px;height:15.92px">125,000.00</div>
<div class="c d alt r" style="left:681.00px;width:60.00px;top:660.34px;height:15.92px">0.00</div>
<div class="c d alt r" style="left:741.00px;width:81.00px;top:660.34px;height:15.92px">108,333.33</div>
<div class="c d alt r" style="left:822.00px;width:84.00px;top:660.34px;height:15.92px">4,166.67</div>
<div class="c d alt r" style="left:906.00px;width:85.00px;top:660.34px;height:15.92px">-104,166.66</div>
<div class="c d l" style="left:7.50px;width:141.50px;top:676.26px;height:15.92px">FNMA Step 1/23/2021-17</div>
<div class="c d l" style="left:149.00px;width:62.00px;top:676.26px;height:15.92px">3139MN412</div>
<div class="c d r" style="left:211.00px;width:55.00px;top:676.26px;height:15.92px">01/24/2017</div>
<div class="c d r" style="left:266.00px;width:51.00px;top:676.26px;height:15.92px">01/23/2021</div>
<div class="c d r" style="left:317.00px;width:71.00px;top:676.26px;height:15.92px">0.00</div>
<div class="c d r" style="left:388.00px;width:63.00px;top:676.26px;height:15.92px">995,000.00</div>
<div class="c d r" style="left:451.00px;width:64.00px;top:676.26px;height:15.92px">27.78</div>
<div class="c d r" style="left:515.00px;width:46.00px;top:676.26px;height:15.92px">0.00</div>
<div class="c d r" style="left:561.00px;width:65.00px;top:676.26px;height:15.92px">995,000.00</div>
<div class="c d r" style="left:626.00px;width:55.00px;top:676.26px;height:15.92px">0.00</div>
<div class="c d r" style="left:681.00px;width:60.00px;top:676.26px;height:15.92px">0.00</div>
<div class="c d r" style="left:741.00px;width:81.00px;top:676.26px;height:15.92px">0.00</div>
<div class="c d r" style="left:822.00px;width:84.00px;top:676.26px;height:15.92px">222.22</div>
<div class="c d r" style="left:906.00px;width:85.00px;top:676.26px;height:15.92px">222.22</div>
<div class="c d alt l" style="left:7.50px;width:141.50px;top:692.18px;height:15.92px">FNMA Step 4/13/2019-16</div>
<div class="c d alt l" style="left:149.00px;width:62.00px;top:692.18px;height:15.92px">31359HGB9</div>
<div class="c d alt r" style="left:211.00px;width:55.00px;top:692.18px;height:15.92px">04/14/2016</div>
<div class="c d alt r" style="left:266.00px;width:51.00px;top:692.18px;height:15.92px">04/13/2019</div>
<div class="c d alt r" style="left:317.00px;width:71.00px;top:692.18px;height:15.92px">23,118,965.52</div>
<div class="c d alt r" style="left:388.00px;width:63.00px;top:692.18px;height:15.92px">0.00</div>
<div class="c d alt r" style="left:451.00px;width:64.00px;top:692.18px;height:15.92px">0.00</div>
<div class="c d alt r" style="left:515.00px;width:46.00px;top:692.18px;height:15.92px">0.00</div>
<div class="c d alt r" style="left:561.00px;width:65.00px;top:692.18px;height:15.92px">23,118,965.52</div>
<div class="c d alt r" style="left:626.00px;width:55.00px;top:692.18px;height:15.92px">0.00</div>
<div class="c d alt r" style="left:681.00px;width:60.00px;top:692.18px;height:15.92px">0.00</div>
<div class="c d alt r" style="left:741.00px;width:81.00px;top:692.18px;height:15.92px">49,833.33</div>
<div class="c d alt r" style="left:822.00px;width:84.00px;top:692.18px;height:15.92px">69,000.00</div>
<div class="c d alt r" style="left:906.00px;width:85.00px;top:692.18px;height:15.92px">19,166.67</div>
<div class="c d l" style="left:7.50px;width:141.50px;top:708.10px;height:15.92px">FNMA Step 4/13/2019-16</div>
<div class="c d l" style="left:149.00px;width:62.00px;top:708.10px;height:15.92px">31359HGB9</div>
<div class="c d r" style="left:211.00px;width:55.00px;top:708.10px;height:15.92px">10/13/2016</div>
<div class="c d r" style="left:266.00px;width:51.00px;top:708.10px;height:15.92px">04/13/2019</div>
<div class="c d r" style="left:317.00px;width:71.00px;top:708.10px;height:15.92px">20,000,000.00</div>
<div class="c d r" style="left:388.00px;width:63.00px;top:708.10px;height:15.92px">0.00</div>
<div class="c d r" style="left:451.00px;width:64.00px;top:708.10px;height:15.92px">0.00</div>
<div class="c d r" style="left:515.00px;width:46.00px;top:708.10px;height:15.92px">0.00</div>
<div class="c d r" style="left:561.00px;width:65.00px;top:708.10px;height:15.92px">20,000,000.00</div>
<div class="c d r" style="left:626.00px;width:55.00px;top:708.10px;height:15.92px">0.00</div>
<div class="c d r" style="left:681.00px;width:60.00px;top:708.10px;height:15.92px">0.00</div>
<div class="c d r" style="left:741.00px;width:81.00px;top:708.10px;height:15.92px">43,333.33</div>
<div class="c d r" style="left:822.00px;width:84.00px;top:708.10px;height:15.92px">60,000.00</div>
<div class="c d r" style="left:906.00px;width:85.00px;top:708.10px;height:15.92px">16,666.67</div>
<div class="c sub l" style="left:7.50px;width:141.50px;top:724.02px;height:15.92px">Sub Total/Average FNMA Bond</div>
<div class="c sub l" style="left:149.00px;width:62.00px;top:724.02px;height:15.92px"></div>
<div class="c sub r" style="left:211.00px;width:55.00px;top:724.02px;height:15.92px"></div>
<div class="c sub r" style="left:266.00px;width:51.00px;top:724.02px;height:15.92px"></div>
<div class="c sub r" style="left:317.00px;width:71.00px;top:724.02px;height:15.92px">68,018,965.52</div>
<div class="c sub r" style="left:388.00px;width:63.00px;top:724.02px;height:15.92px">995,000.00</div>
<div class="c sub r" style="left:451.00px;width:64.00px;top:724.02px;height:15.92px">27.78</div>
<div class="c sub r" style="left:515.00px;width:46.00px;top:724.02px;height:15.92px">0.00</div>
<div class="c sub r" style="left:561.00px;width:65.00px;top:724.02px;height:15.92px">69,013,965.52</div>
<div class="c sub r" style="left:626.00px;width:55.00px;top:724.02px;height:15.92px">125,000.00</div>
<div class="c sub r" style="left:681.00px;width:60.00px;top:724.02px;height:15.92px">0.00</div>
<div class="c sub r" style="left:741.00px;width:81.00px;top:724.02px;height:15.92px">201,499.99</div>
<div class="c sub r" style="left:822.00px;width:84.00px;top:724.02px;height:15.92px">133,388.89</div>
<div class="c sub r" style="left:906.00px;width:85.00px;top:724.02px;height:15.92px">-68,111.10</div>
<div class="c tot l" style="left:7.50px;width:141.50px;top:739.94px;height:15.92px">Total / Average</div>
<div class="c tot l" style="left:149.00px;width:62.00px;top:739.94px;height:15.92px"></div>
<div class="c tot r" style="left:211.00px;width:55.00px;top:739.94px;height:15.92px"></div>
<div class="c tot r" style="left:266.00px;width:51.00px;top:739.94px;height:15.92px"></div>
<div class="c tot r" style="left:317.00px;width:71.00px;top:739.94px;height:15.92px">306,791,596.14</div>
<div class="c tot r" style="left:388.00px;width:63.00px;top:739.94px;height:15.92px">26,145,000.00</div>
<div class="c tot r" style="left:451.00px;width:64.00px;top:739.94px;height:15.92px">722.22</div>
<div class="c tot r" style="left:515.00px;width:46.00px;top:739.94px;height:15.92px">0.00</div>
<div class="c tot r" style="left:561.00px;width:65.00px;top:739.94px;height:15.92px">332,936,596.14</div>
<div class="c tot r" style="left:626.00px;width:55.00px;top:739.94px;height:15.92px">223,333.33</div>
<div class="c tot r" style="left:681.00px;width:60.00px;top:739.94px;height:15.92px">0.00</div>
<div class="c tot r" style="left:741.00px;width:81.00px;top:739.94px;height:15.92px">538,486.10</div>
<div class="c tot r" style="left:822.00px;width:84.00px;top:739.94px;height:15.92px">611,277.77</div>
<div class="c tot r" style="left:906.00px;width:85.00px;top:739.94px;height:15.92px">72,791.67</div>
<div class="vl" style="left:7.50px;top:286.60px;height:470.26px"></div>
<div class="vl" style="left:149.00px;top:286.60px;height:470.26px"></div>
<div class="vl" style="left:211.00px;top:286.60px;height:470.26px"></div>
<div class="vl" style="left:266.00px;top:286.60px;height:470.26px"></div>
<div class="vl" style="left:317.00px;top:286.60px;height:470.26px"></div>
<div class="vl" style="left:388.00px;top:286.60px;height:470.26px"></div>
<div class="vl" style="left:451.00px;top:286.60px;height:470.26px"></div>
<div class="vl" style="left:515.00px;top:286.60px;height:470.26px"></div>
<div class="vl" style="left:561.00px;top:286.60px;height:470.26px"></div>
<div class="vl" style="left:626.00px;top:286.60px;height:470.26px"></div>
<div class="vl" style="left:681.00px;top:286.60px;height:470.26px"></div>
<div class="vl" style="left:741.00px;top:286.60px;height:470.26px"></div>
<div class="vl" style="left:822.00px;top:286.60px;height:470.26px"></div>
<div class="vl" style="left:906.00px;top:286.60px;height:470.26px"></div>
<div class="vl" style="left:991.00px;top:286.60px;height:470.26px"></div>
<div class="c sec l" style="left:8.50px;width:982.50px;top:311.10px;height:14.92px">FFCB Bond</div>
<div class="c sec l" style="left:8.50px;width:982.50px;top:358.86px;height:14.92px">FHLB Bond</div>
<div class="c sec l" style="left:8.50px;width:982.50px;top:565.82px;height:14.92px">FHLMC Bond</div>
<div class="c sec l" style="left:8.50px;width:982.50px;top:645.42px;height:14.92px">FNMA Bond</div>
<div class="hl" style="left:7.50px;width:984.50px;top:286.60px"></div>
<div class="hl" style="left:7.50px;width:984.50px;top:310.10px"></div>
<div class="hl" style="left:7.50px;width:984.50px;top:326.02px"></div>
<div class="hl" style="left:7.50px;width:984.50px;top:341.94px"></div>
<div class="hl" style="left:7.50px;width:984.50px;top:357.86px"></div>
<div class="hl" style="left:7.50px;width:984.50px;top:373.78px"></div>
<div class="hl" style="left:7.50px;width:984.50px;top:389.70px"></div>
<div class="hl" style="left:7.50px;width:984.50px;top:405.62px"></div>
<div class="hl" style="left:7.50px;width:984.50px;top:421.54px"></div>
<div class="hl" style="left:7.50px;width:984.50px;top:437.46px"></div>
<div class="hl" style="left:7.50px;width:984.50px;top:453.38px"></div>
<div class="hl" style="left:7.50px;width:984.50px;top:469.30px"></div>
<div class="hl" style="left:7.50px;width:984.50px;top:485.22px"></div>
<div class="hl" style="left:7.50px;width:984.50px;top:501.14px"></div>
<div class="hl" style="left:7.50px;width:984.50px;top:517.06px"></div>
<div class="hl" style="left:7.50px;width:984.50px;top:532.98px"></div>
<div class="hl" style="left:7.50px;width:984.50px;top:548.90px"></div>
<div class="hl" style="left:7.50px;width:984.50px;top:564.82px"></div>
<div class="hl" style="left:7.50px;width:984.50px;top:580.74px"></div>
<div class="hl" style="left:7.50px;width:984.50px;top:596.66px"></div>
<div class="hl" style="left:7.50px;width:984.50px;top:612.58px"></div>
<div class="hl" style="left:7.50px;width:984.50px;top:628.50px"></div>
<div class="hl" style="left:7.50px;width:984.50px;top:644.42px"></div>
<div class="hl" style="left:7.50px;width:984.50px;top:660.34px"></div>
<div class="hl" style="left:7.50px;width:984.50px;top:676.26px"></div>
<div class="hl" style="left:7.50px;width:984.50px;top:692.18px"></div>
<div class="hl" style="left:7.50px;width:984.50px;top:708.10px"></div>
<div class="hl" style="left:7.50px;width:984.50px;top:724.02px"></div>
<div class="hl" style="left:7.50px;width:984.50px;top:739.94px"></div>
<div class="hl" style="left:7.50px;width:984.50px;top:755.86px"></div>

</body></html>
